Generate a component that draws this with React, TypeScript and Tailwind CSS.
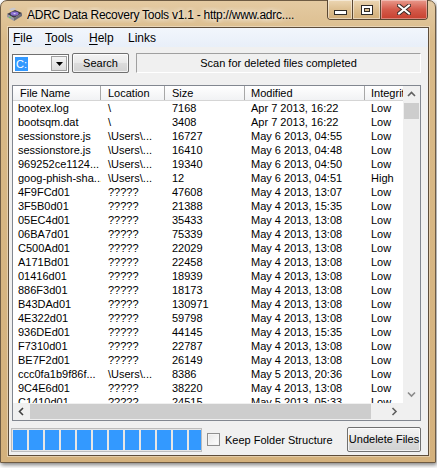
import React from "react";

type Row = [string, string, string, string, string];

const U = "\\Users\\...";
const Q = "?????";

const rows: Row[] = [
  ["bootex.log", "\\", "7168", "Apr 7 2013, 16:22", "Low"],
  ["bootsqm.dat", "\\", "3408", "Apr 7 2013, 16:22", "Low"],
  ["sessionstore.js", U, "16727", "May 6 2013, 04:55", "Low"],
  ["sessionstore.js", U, "16410", "May 6 2013, 04:48", "Low"],
  ["969252ce1124...", U, "19340", "May 6 2013, 04:50", "Low"],
  ["goog-phish-sha...", U, "12", "May 6 2013, 04:51", "High"],
  ["4F9FCd01", Q, "47608", "May 4 2013, 13:07", "Low"],
  ["3F5B0d01", Q, "21388", "May 4 2013, 15:35", "Low"],
  ["05EC4d01", Q, "35433", "May 4 2013, 13:08", "Low"],
  ["06BA7d01", Q, "75339", "May 4 2013, 13:08", "Low"],
  ["C500Ad01", Q, "22029", "May 4 2013, 13:08", "Low"],
  ["A171Bd01", Q, "22458", "May 4 2013, 13:08", "Low"],
  ["01416d01", Q, "18939", "May 4 2013, 13:08", "Low"],
  ["886F3d01", Q, "18173", "May 4 2013, 13:08", "Low"],
  ["B43DAd01", Q, "130971", "May 4 2013, 13:08", "Low"],
  ["4E322d01", Q, "59798", "May 4 2013, 13:08", "Low"],
  ["936DEd01", Q, "44145", "May 4 2013, 15:35", "Low"],
  ["F7310d01", Q, "22787", "May 4 2013, 13:08", "Low"],
  ["BE7F2d01", Q, "26149", "May 4 2013, 13:08", "Low"],
  ["ccc0fa1b9f86f...", U, "8386", "May 5 2013, 20:36", "Low"],
  ["9C4E6d01", Q, "38220", "May 4 2013, 13:08", "Low"],
  ["C1410d01", Q, "24515", "May 5 2013, 05:33", "Low"],
];

function DriveIcon() {
  return (
    <svg width="17" height="15" viewBox="0 0 17 15">
      <path d="M1 7 L9 3 L16 6 L8 11 Z" fill="#3b3b45" />
      <path d="M1 7 L8 11 L8 14 L1 10 Z" fill="#9a9aa2" />
      <path d="M8 11 L16 6 L16 9 L8 14 Z" fill="#6c6c76" />
      <ellipse cx="8.6" cy="6.6" rx="4" ry="2.2" fill="#8a6fd0" />
      <ellipse cx="8.6" cy="6.6" rx="1.2" ry="0.7" fill="#d9d2f2" />
      <path d="M3 2 L8 0.5 L10 2 L5 4 Z" fill="#c8c8d0" />
      <rect x="3" y="10" width="2" height="1" fill="#5fd35f" />
    </svg>
  );
}

function TitleBar() {
  return (
    <div className="-ml-[7px] -mr-[6px] flex h-[26px] shrink-0 items-start pl-[5px] pr-[7px]">
      <div className="mt-[6px] shrink-0">
        <DriveIcon />
      </div>
      <div className="ml-[4px] mt-[6px] min-w-0 flex-1 overflow-hidden whitespace-nowrap text-[12px] leading-[16px] tracking-[-0.25px] text-black [text-shadow:0_0_8px_#fff,0_0_4px_#fff]">
        ADRC Data Recovery Tools v1.1 - http://www.adrc....
      </div>
      <div className="-mt-px flex h-[20px] shrink-0 overflow-hidden rounded-b-[4px] border border-t-0 border-[#5a4733]">
        <div className="flex w-[24px] items-center justify-center bg-[linear-gradient(180deg,#ecd7b4,#dcbd8d_55%,#d2ae79)] shadow-[inset_0_0_0_1px_rgba(255,255,255,0.45)]">
          <svg width="13" height="5" viewBox="0 0 13 5" className="mt-[5px]">
            <rect x="0.5" y="0.5" width="12" height="4" fill="#fff" stroke="#2e2a26" />
          </svg>
        </div>
        <div className="flex w-[28px] items-center justify-center border-l border-[#5a4733] bg-[linear-gradient(180deg,#ecd7b4,#dcbd8d_55%,#d2ae79)] shadow-[inset_0_0_0_1px_rgba(255,255,255,0.45)]">
          <svg width="12" height="10" viewBox="0 0 12 10">
            <rect x="0.5" y="0.5" width="11" height="9" fill="#fff" stroke="#2e2a26" />
            <rect x="3.5" y="3.5" width="5" height="3" fill="#d9bb8c" stroke="#2e2a26" />
          </svg>
        </div>
        <div className="flex w-[47px] items-center justify-center border-l border-[#5a4733] bg-[linear-gradient(180deg,#e99a8c,#d45b4b_50%,#c7402f)] shadow-[inset_0_0_0_1px_rgba(255,255,255,0.35)]">
          <svg width="14" height="11" viewBox="0 0 14 11">
            <path d="M2 1.5 L12 9.5 M12 1.5 L2 9.5" stroke="#3a2a26" strokeWidth="4" strokeLinecap="square" />
            <path d="M2 1.5 L12 9.5 M12 1.5 L2 9.5" stroke="#fff" strokeWidth="2" strokeLinecap="square" />
          </svg>
        </div>
      </div>
    </div>
  );
}

function MenuBar() {
  return (
    <div className="flex h-[19px] shrink-0 items-center bg-[linear-gradient(180deg,#f2f6fc,#e8eff9)] pl-[4px] text-[12px] leading-[16px]">
      <span className="w-[32px]">
        <span className="underline underline-offset-2">F</span>ile
      </span>
      <span className="w-[44px]">
        <span className="underline underline-offset-2">T</span>ools
      </span>
      <span className="w-[39px]">
        <span className="underline underline-offset-2">H</span>elp
      </span>
      <span>Links</span>
    </div>
  );
}

function Toolbar() {
  return (
    <div className="mt-[6px] flex h-[20px] shrink-0 pl-[3px] pr-[7px] text-[11px]">
      <div className="flex h-[19px] w-[57px] self-end border border-[#707070] bg-white p-[1px]">
        <div className="flex flex-1 items-center">
          <span className="ml-px bg-[#3399ff] px-px leading-[14px] text-white">C:</span>
        </div>
        <div className="flex w-[16px] items-center justify-center border border-[#a0a0a0] bg-[linear-gradient(180deg,#f4f4f4,#dcdcdc)]">
          <svg width="7" height="4" viewBox="0 0 7 4">
            <path d="M0 0 L7 0 L3.5 4 Z" fill="#000" />
          </svg>
        </div>
      </div>
      <button className="ml-[3px] h-[20px] w-[57px] rounded-[2px] border border-[#707070] bg-[linear-gradient(180deg,#f4f4f4,#e8e8e8_50%,#dcdcdc_50%,#d2d2d2)] text-[11px] leading-[18px] shadow-[inset_0_0_0_1px_rgba(255,255,255,0.7)]">
        Search
      </button>
      <div className="ml-[7px] flex h-[20px] flex-1 items-center justify-center border border-b-white border-l-[#a0a0a0] border-r-white border-t-[#a0a0a0] leading-[14px]">
        Scan for deleted files completed
      </div>
    </div>
  );
}

const colW = ["w-[88px]", "w-[64px]", "w-[80px]", "w-[120px]", "w-[80px]"];
const headPad = ["pl-[7px]", "pl-[7px]", "pl-[7px]", "pl-[6px]", "pl-[6px]"];
const rowPad = ["pl-[5px]", "pl-[7px]", "pl-[7px]", "pl-[6px]", "pl-[6px]"];
const headers = ["File Name", "Location", "Size", "Modified", "Integrity"];

function Chevron({ dir, color }: { dir: "up" | "down" | "left" | "right"; color: string }) {
  const pts = {
    up: "1,5 4.5,1.5 8,5",
    down: "1,1.5 4.5,5 8,1.5",
    left: "5,1 1.5,4.5 5,8",
    right: "1.5,1 5,4.5 1.5,8",
  }[dir];
  const vertical = dir === "up" || dir === "down";
  return (
    <svg width={vertical ? 9 : 7} height={vertical ? 7 : 9} viewBox={vertical ? "0 0 9 7" : "0 0 7 9"}>
      <polyline points={pts} fill="none" stroke={color} strokeWidth="1.6" />
    </svg>
  );
}

function FileList() {
  return (
    <div className="ml-[3px] mr-[7px] mt-[12px] flex h-[336px] shrink-0 flex-col border border-[#828790] bg-white text-[11px]">
      <div className="flex min-h-0 flex-1">
        <div className="min-w-0 flex-1 overflow-hidden">
          <div className="flex h-[15px] border-b border-[#d5d5d5] bg-[linear-gradient(180deg,#ffffff,#f1f2f4)] leading-[14px]">
            {headers.map((h, i) => (
              <div
                key={h}
                className={`${colW[i]} ${headPad[i]} shrink-0 overflow-hidden whitespace-nowrap border-r border-[#a7a7a7]`}
              >
                {h}
              </div>
            ))}
          </div>
          {rows.map((r, ri) => (
            <div key={ri} className="flex h-[14px] leading-[14px]">
              {r.map((c, i) => (
                <div key={i} className={`${colW[i]} ${rowPad[i]} shrink-0 overflow-hidden whitespace-nowrap`}>
                  {c}
                </div>
              ))}
            </div>
          ))}
        </div>
        <div className="flex w-[17px] shrink-0 flex-col bg-[#f0f0f0]">
          <div className="flex h-[17px] items-center justify-center">
            <Chevron dir="up" color="#606060" />
          </div>
          <div className="mx-px h-[16px] bg-[#cdcdcd]" />
          <div className="flex-1" />
          <div className="flex h-[17px] items-center justify-center">
            <Chevron dir="down" color="#8a8a8a" />
          </div>
        </div>
      </div>
      <div className="flex h-[17px] shrink-0 bg-[#f0f0f0]">
        <div className="flex w-[17px] items-center justify-center">
          <Chevron dir="left" color="#404040" />
        </div>
        <div className="my-px w-[341px] bg-[#cdcdcd]" />
        <div className="flex-1" />
        <div className="flex w-[17px] items-center justify-center">
          <Chevron dir="right" color="#606060" />
        </div>
        <div className="w-[17px] bg-[#f0f0f0]" />
      </div>
    </div>
  );
}

function BottomBar() {
  return (
    <div className="mt-[6px] flex h-[25px] shrink-0 items-center pr-[7px] text-[11px]">
      <div className="ml-[2px] flex h-[24px] w-[191px] gap-[2px] self-end overflow-hidden border border-[#bcbcbc] bg-[#e6e6e6] p-px">
        {Array.from({ length: 12 }).map((_, i) => (
          <div key={i} className="h-full w-[14px] shrink-0 bg-[#3399ff]" />
        ))}
      </div>
      <div className="ml-[5px] h-[13px] w-[13px] border border-[#8f8f8f] bg-[linear-gradient(135deg,#e6e6e6,#ffffff)] shadow-[inset_0_0_0_1px_#f4f4f4]" />
      <span className="ml-[5px] leading-[14px]">Keep Folder Structure</span>
      <button className="ml-auto h-[25px] w-[74px] rounded-[2px] border border-[#707070] bg-[linear-gradient(180deg,#f4f4f4,#e8e8e8_50%,#dcdcdc_50%,#d2d2d2)] text-[11px] leading-[23px] whitespace-nowrap shadow-[inset_0_0_0_1px_rgba(255,255,255,0.7)]">
        Undelete Files
      </button>
    </div>
  );
}

export default function App() {
  return (
    <div className="h-[468px] w-[437px] overflow-hidden bg-white font-['Liberation_Sans',Arial,sans-serif] text-black">
      <div className="flex h-[463px] w-[436px] flex-col rounded-t-[7px] border border-[#6e5b43] bg-[linear-gradient(180deg,#e4caa2_0px,#d9ba88_40px,#d4b17c_100%)] pb-[6px] pl-[7px] pr-[6px] shadow-[1px_2px_4px_rgba(0,0,0,0.5)]">
        <TitleBar />
        <div className="flex min-h-0 flex-1 flex-col border border-[#5e4d3a] bg-[#f0f0f0] shadow-[0_0_0_1px_rgba(255,255,255,0.35)]">
          <MenuBar />
          <Toolbar />
          <FileList />
          <BottomBar />
        </div>
      </div>
    </div>
  );
}
